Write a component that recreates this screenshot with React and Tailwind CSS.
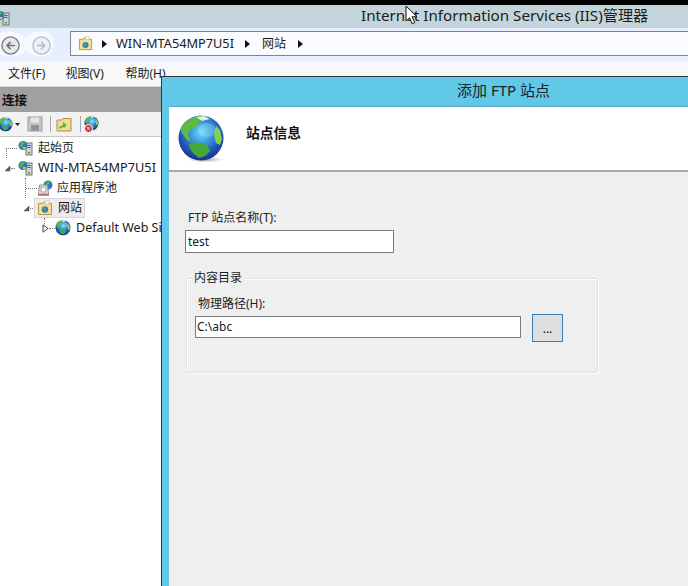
import React from "react";

const FONT = "font-['Noto_Sans','Noto_Sans_CJK_SC',sans-serif]";

function Globe({ size = 16, id = "g" }) {
  return (
    <svg width={size} height={size} viewBox="0 0 48 48" className="shrink-0 block">
      <defs>
        <radialGradient id={id + "s"} cx="50%" cy="38%" r="62%">
          <stop offset="0" stopColor="#6fdcf8" />
          <stop offset="0.35" stopColor="#3f9ee0" />
          <stop offset="0.72" stopColor="#2458b8" />
          <stop offset="1" stopColor="#16308c" />
        </radialGradient>
        <radialGradient id={id + "h"} cx="50%" cy="50%" r="50%">
          <stop offset="0" stopColor="#666" stopOpacity="0.75" />
          <stop offset="1" stopColor="#999" stopOpacity="0" />
        </radialGradient>
      </defs>
      <ellipse cx="28" cy="44.5" rx="18" ry="3" fill={`url(#${id}h)`} />
      <circle cx="24" cy="23" r="22.5" fill={`url(#${id}s)`} />
      <path d="M7 9c4-5 11-8 17-8l4 3-6 3-3 5-5 2-3 4 1 5 2 4-4-2-6-8 0-5z" fill="#5dbb3f" />
      <path d="M12 29c5-2 12-2 18 1l3 6-5 5-6 2-5-4-4-5z" fill="#46a83a" />
      <path d="M39 11l4 4 2 9-2 6-4-2-2-8z" fill="#86d050" />
      <path d="M19 2l8-1 6 3-8 2z" fill="#e4ecdf" />
      <ellipse cx="30" cy="15" rx="9" ry="7" fill="#bff2ff" opacity="0.25" />
    </svg>
  );
}

function FolderIcon({ size = 16 }) {
  return (
    <svg width={size} height={size} viewBox="0 0 16 16" className="shrink-0 block">
      <path d="M1.5 3.5h4l1-1.5h5l.5 1.5h2.5v11h-13z" fill="#f6dc9a" stroke="#b8964e" />
      <rect x="8" y="1" width="4" height="3" fill="#fff" stroke="#c8b070" strokeWidth="0.6" />
      <circle cx="8" cy="9.5" r="3.2" fill="#2c7fc6" />
      <path d="M6 8l2-1 1 2-2 2z" fill="#55b040" />
    </svg>
  );
}

function ServerIcon({ size = 16 }) {
  return (
    <svg width={size} height={size} viewBox="0 0 16 16" className="shrink-0 block">
      <rect x="9" y="3" width="6" height="12" fill="#cfd3d6" stroke="#6d7478" />
      <rect x="10.5" y="5" width="3" height="1" fill="#555" />
      <rect x="10.5" y="7" width="3" height="1" fill="#555" />
      <rect x="11" y="12" width="2" height="1.5" fill="#4a9a3c" />
      <circle cx="6" cy="5.5" r="4.5" fill="#2a78c8" />
      <path d="M3 3l3-2 2 2-2 2-1 3-2-2z" fill="#5ab53e" />
      <path d="M6 7l3 0-1 2-2 0z" fill="#f1c23c" />
    </svg>
  );
}

function PoolIcon() {
  return (
    <svg width="16" height="16" viewBox="0 0 16 16" className="shrink-0 block">
      <circle cx="11" cy="5" r="4.5" fill="#2a78c8" />
      <path d="M8.5 3l3-2 1.5 2-2 2-1 1z" fill="#5ab53e" />
      <path d="M1.5 14l1-9h8l1 9z" fill="#ededed" stroke="#8a8a8a" />
      <rect x="4" y="7" width="5" height="5" fill="#fff" stroke="#777" strokeWidth="0.7" />
      <path d="M1 15h11" stroke="#c0392b" strokeWidth="1.2" />
    </svg>
  );
}

function Caret({ open }) {
  return open ? (
    <svg width="7" height="7" viewBox="0 0 7 7" className="shrink-0 block"><path d="M6 1v5H1z" fill="#595959" stroke="#595959" strokeWidth="0.5" /></svg>
  ) : (
    <svg width="7" height="9" viewBox="0 0 7 9" className="shrink-0 block"><path d="M1 .8l5 3.7-5 3.7z" fill="#fff" stroke="#444" /></svg>
  );
}

function Crumb({ className }) {
  return (
    <svg width="5" height="8" viewBox="0 0 5 8" className={`shrink-0 block ${className}`}><path d="M0 0l5 4-5 4z" fill="#111" /></svg>
  );
}

function HDots({ w }) {
  return <span className="block border-t border-dotted border-[#777] shrink-0" style={{ width: w }} />;
}

function NavBtn({ light }) {
  const c = light ? "#b4bac2" : "#777";
  return (
    <svg width="19" height="19" viewBox="0 0 19 19" className="shrink-0 block">
      <circle cx="9.5" cy="9.5" r="8.6" fill={light ? "#eef1f8" : "#e8e8e8"} stroke={c} strokeWidth="1.3" />
      {light ? (
        <path d="M5 9.5h7M9 5.8l3.6 3.7L9 13.2" fill="none" stroke={c} strokeWidth="1.5" />
      ) : (
        <path d="M14 9.5H6M9.6 5.8L6 9.5l3.6 3.7" fill="none" stroke={c} strokeWidth="1.7" />
      )}
    </svg>
  );
}

export default function App() {
  return (
    <div className={`relative w-[688px] h-[586px] overflow-hidden bg-white text-[12px] text-[#1a1a1a] ${FONT}`}>
      <div className="h-[5px] bg-black" />
      {/* title bar */}
      <div className="h-[23px] bg-[#c3d5da] relative flex items-center">
        <div className="-ml-[6px] mt-[2px]"><ServerIcon /></div>
        <span className="absolute left-[361px] top-0 text-[15.2px] leading-[20px] text-[#1c1c1c]">Internet Information Services (IIS)管理器</span>
      </div>
      {/* address row */}
      <div className="h-[33px] bg-[#e6eeff] flex">
        <div className="relative w-[70px] flex items-center gap-[12px] pl-[1px] pt-[1px] shrink-0">
          <svg width="56" height="29" viewBox="0 0 56 29" className="absolute left-0 top-[2px]">
            <path d="M0 3c12-3 20 0 26 4 6-5 14-7 24-4 4 4 4 18 0 22-10 3-18 1-24-4-6 5-14 7-26 4z" fill="#f7f9ff" />
          </svg>
          <span className="relative"><NavBtn /></span>
          <span className="relative"><NavBtn light /></span>
        </div>
        <div className="flex-1 mt-[3px] h-[25px] bg-[#fafbff] border-y border-l border-[#808488] flex items-center pl-[7px]">
          <FolderIcon size={15} />
          <Crumb className="ml-[9px]" />
          <span className="ml-[9px] text-[12.75px]">WIN-MTA54MP7U5I</span>
          <Crumb className="ml-[11px]" />
          <span className="ml-[12px]">网站</span>
          <Crumb className="ml-[12px]" />
        </div>
      </div>
      {/* menu */}
      <div className="h-[26px] bg-[#f8f8f8] flex items-center pl-[8px] gap-[20px] border-b border-[#d9d9d9]">
        <span>文件(F)</span>
        <span className="w-[40px] whitespace-nowrap">视图(V)</span>
        <span>帮助(H)</span>
      </div>
      {/* left pane */}
      <div className="w-[161px]">
        <div className="h-[25px] bg-[#a0a0a0] flex items-center pl-[2px] pt-[3px] font-semibold text-[12.5px] text-[#111]">连接</div>
        <div className="h-[25px] bg-[#f2f2f2] border-b border-[#c8c8c8] flex items-center -ml-[2px]">
          <Globe size={15} id="t1" />
          <svg width="5" height="3" viewBox="0 0 5 3" className="ml-[2px] block"><path d="M0 0h5L2.5 3z" fill="#222" /></svg>
          <svg width="16" height="16" viewBox="0 0 16 16" className="ml-[7px] block"><rect x="1" y="1" width="14" height="14" fill="#c4c7ca" stroke="#9a9da0" /><rect x="4" y="1.5" width="8" height="5" fill="#e5e6e7" /><rect x="4" y="9" width="8" height="5.5" fill="#8f9295" /></svg>
          <span className="ml-[7px] w-px h-[16px] bg-[#a8a8a8]" />
          <svg width="16" height="16" viewBox="0 0 16 16" className="ml-[5px] block"><path d="M1 4h5l1-1.5h8V15H1z" fill="#f2dc93" stroke="#a88f4c" /><path d="M3 11l4-2 0-3 4 3-3 3-1-1-3 2z" fill="#5cb33c" /></svg>
          <span className="ml-[8px] w-px h-[16px] bg-[#a8a8a8]" />
          <span className="relative ml-[3px] w-[16px] h-[16px]">
            <Globe size={15} id="t2" />
            <span className="absolute left-0 bottom-[-1px] w-[9px] h-[9px] rounded-full bg-[#c8323c] border border-white text-white text-[7px] leading-[7px] text-center">×</span>
          </span>
        </div>
        <div className="bg-white h-[449px] pt-[1px] relative">
          <span className="absolute left-[6px] top-[11px] h-[10px] border-l border-dotted border-[#777]" />
          <span className="absolute left-[25px] top-[41px] h-[20px] border-l border-dotted border-[#777]" />
          <span className="absolute left-[44px] top-[81px] h-[8px] border-l border-dotted border-[#777]" />
          <div className="h-[20px] flex items-center pl-[6px]">
            <HDots w={11} />
            <ServerIcon />
            <span className="ml-[5px]">起始页</span>
          </div>
          <div className="h-[20px] flex items-center pl-[4px]">
            <Caret open />
            <HDots w={4} />
            <span className="ml-[2px]"><ServerIcon /></span>
            <span className="ml-[5px] whitespace-nowrap text-[12.75px]">WIN-MTA54MP7U5I</span>
          </div>
          <div className="h-[20px] flex items-center pl-[26px]">
            <HDots w={11} />
            <PoolIcon />
            <span className="ml-[4px]">应用程序池</span>
          </div>
          <div className="h-[20px] flex items-center pl-[23px]">
            <Caret open />
            <HDots w={3} />
            <div className="ml-px h-[20px] flex items-center bg-[#ececec] border border-[#d8d8d8] pl-[2px] pr-[2px]">
              <FolderIcon />
              <span className="ml-[5px]">网站</span>
            </div>
          </div>
          <div className="h-[20px] flex items-center pl-[42px] whitespace-nowrap">
            <Caret />
            <HDots w={6} />
            <Globe size={16} id="t3" />
            <span className="ml-[5px] text-[12.5px]">Default Web Site</span>
          </div>
        </div>
      </div>

      {/* dialog overlaying the window */}
      <div className="absolute left-[161px] top-[76px] w-[540px] h-[520px] bg-[#62c8e8] border-l border-t border-[#303438] flex flex-col">
        <div className="h-[29px] flex items-center shrink-0 pl-[295px] pb-[2px] text-[15px] text-[#1c2226]">添加 FTP 站点</div>
        <div className="flex-1 ml-[7px] bg-[#efefef] border-t border-[#5ba9c4] flex flex-col">
          <div className="h-[63px] bg-white border-b-2 border-[#a8a8a8] box-content flex items-center">
            <div className="ml-[8px]"><Globe size={48} id="big" /></div>
            <span className="ml-[21px] font-bold text-[13.75px] text-[#111] -mt-[11px]">站点信息</span>
          </div>
          <div className="pl-[16px]">
            <div className="ml-[3px] mt-[38px] leading-[16px] text-[#222]">FTP 站点名称(T):</div>
            <div className="mt-[4px] w-[209px] h-[23px] bg-white border border-[#7a7a7a] flex items-center pl-[2px]">test</div>
            <div className="relative mt-[25px] ml-px w-[412px] h-[95px] border border-[#d8e2ea] rounded-[2px] pl-[8px] shadow-[inset_1px_1px_0_#fff,1px_1px_0_#fff]">
              <span className="absolute left-[5px] -top-[9px] bg-[#efefef] px-[2px] leading-[16px] text-[#222]">内容目录</span>
              <div className="ml-[3px] mt-[17px] leading-[16px] text-[#222]">物理路径(H):</div>
              <div className="mt-[2px] flex items-start">
                <div className="mt-[2px] w-[326px] h-[22px] bg-white border border-[#7a7a7a] flex items-center pl-[1px]">C:\abc</div>
                <div className="ml-[11px] w-[31px] h-[28px] bg-[#dedede] border border-[#3a80b8] flex items-center justify-center pt-[2px] leading-none text-[#111]">...</div>
              </div>
            </div>
          </div>
        </div>
      </div>

      {/* mouse pointer */}
      <svg width="13" height="20" viewBox="0 0 13 20" className="absolute left-[405px] top-[5px]">
        <path d="M1 1v15l3.5-3.2 2.7 6 2.6-1.2-2.7-5.8H12z" fill="#fff" stroke="#111" strokeWidth="1" />
      </svg>
    </div>
  );
}
